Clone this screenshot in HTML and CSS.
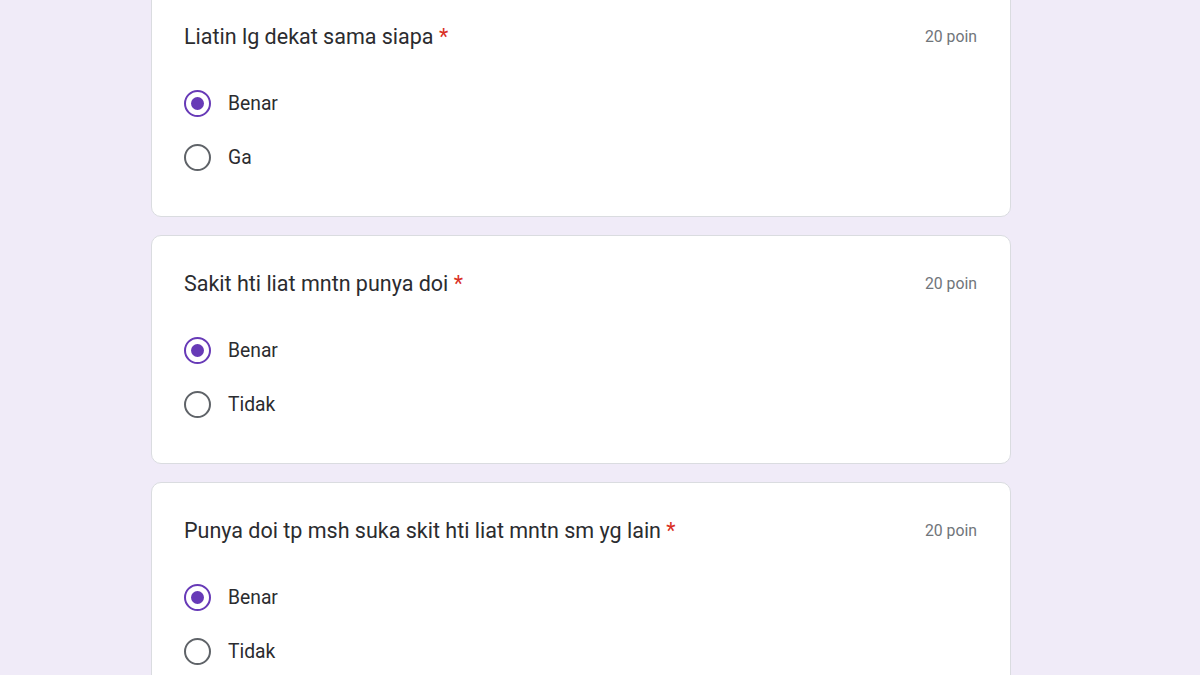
FILE: index.html
```html
<!DOCTYPE html>
<html lang="id">
<head>
<meta charset="utf-8">
<title>Kuis</title>
<link rel="stylesheet" href="styles.css">
</head>
<body>
<main class="form">
  <section class="card">
    <div class="q-head">
      <div class="q-title">Liatin lg dekat sama siapa <span class="req">*</span></div>
      <div class="q-points">20 poin</div>
    </div>
    <div class="options">
      <label class="opt"><span class="radio checked"></span><span class="opt-text">Benar</span></label>
      <label class="opt"><span class="radio"></span><span class="opt-text">Ga</span></label>
    </div>
  </section>
  <section class="card">
    <div class="q-head">
      <div class="q-title">Sakit hti liat mntn punya doi <span class="req">*</span></div>
      <div class="q-points">20 poin</div>
    </div>
    <div class="options">
      <label class="opt"><span class="radio checked"></span><span class="opt-text">Benar</span></label>
      <label class="opt"><span class="radio"></span><span class="opt-text">Tidak</span></label>
    </div>
  </section>
  <section class="card">
    <div class="q-head">
      <div class="q-title">Punya doi tp msh suka skit hti liat mntn sm yg lain <span class="req">*</span></div>
      <div class="q-points">20 poin</div>
    </div>
    <div class="options">
      <label class="opt"><span class="radio checked"></span><span class="opt-text">Benar</span></label>
      <label class="opt"><span class="radio"></span><span class="opt-text">Tidak</span></label>
    </div>
  </section>
</main>
</body>
</html>
```
FILE: styles.css
```css
html, body {
  margin: 0;
  padding: 0;
  height: 100%;
  overflow: hidden;
}
body {
  background: #f0ebf8;
  font-family: Roboto, "Liberation Sans", Arial, sans-serif;
  color: #202124;
}
.form {
  width: 860px;
  margin: -12px 0 0 151px;
  display: flex;
  flex-direction: column;
  gap: 18px;
}
.card {
  box-sizing: border-box;
  height: 229px;
  background: #fff;
  border: 1px solid #dadce0;
  border-radius: 10px;
  padding: 33px 33px 0 32px;
}
.q-head {
  display: flex;
  justify-content: space-between;
  align-items: center;
  height: 28px;
}
.q-title {
  font-size: 21.5px;
  color: #2b2c2f;
}
.req {
  color: #d93025;
}
.q-points {
  font-size: 15.8px;
  color: #70757a;
}
.options {
  margin-top: 40px;
  display: flex;
  flex-direction: column;
  gap: 27px;
}
.opt {
  display: flex;
  align-items: center;
  gap: 17px;
  height: 27px;
}
.radio {
  box-sizing: border-box;
  width: 27px;
  height: 27px;
  border: 2.6px solid #5f6368;
  border-radius: 50%;
  display: flex;
  align-items: center;
  justify-content: center;
}
.radio.checked {
  border-color: #673ab7;
}
.radio.checked::after {
  content: "";
  width: 13px;
  height: 13px;
  border-radius: 50%;
  background: #673ab7;
}
.opt-text {
  font-size: 19.3px;
  color: #2b2c2f;
}
```
